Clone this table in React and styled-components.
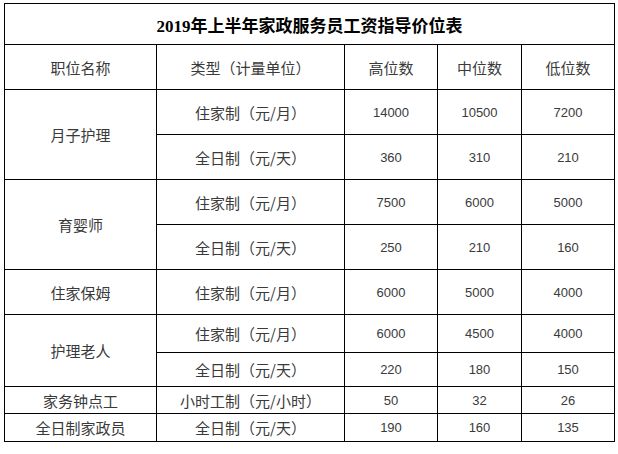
import React from "react";
import styled, { createGlobalStyle } from "styled-components";

const Global = createGlobalStyle`
  html, body { margin: 0; padding: 0; background: #fff; }
  body { font-family: "Noto Sans CJK SC", "Liberation Sans", sans-serif; }
`;

const Page = styled.div`
  padding: 3px 0 0 4px;
`;

const Grid = styled.div`
  display: grid;
  width: 609px;
  grid-template-columns: 151px 187px 92px 83px 92px;
  grid-template-rows: 40px 44px 44px 44px 44px 44px 44px 37px 33px 26px 27px;
  gap: 1px;
  padding: 1px;
  background: #000;
`;

const Cell = styled.div`
  background: #fff;
  display: flex;
  align-items: center;
  justify-content: center;
  color: #3a3a3a;
  font-size: 15px;
  font-family: "Noto Sans CJK SC", sans-serif;
  white-space: nowrap;
  grid-row: ${(p) => p.$row || "auto"};
  grid-column: ${(p) => p.$col || "auto"};
`;

const Title = styled(Cell)`
  grid-column: 1 / span 5;
  color: #000;
  font-size: 17px;
  font-weight: 700;
  font-family: "Liberation Serif", "Noto Sans CJK SC", serif;
  padding-top: 1px;
`;

const Num = styled(Cell)`
  font-family: "Liberation Sans", sans-serif;
  font-size: 13px;
`;

const rows = [
  { name: "月子护理", span: 2, items: [["住家制（元/月）", "14000", "10500", "7200"], ["全日制（元/天）", "360", "310", "210"]] },
  { name: "育婴师", span: 2, items: [["住家制（元/月）", "7500", "6000", "5000"], ["全日制（元/天）", "250", "210", "160"]] },
  { name: "住家保姆", span: 1, items: [["住家制（元/月）", "6000", "5000", "4000"]] },
  { name: "护理老人", span: 2, items: [["住家制（元/月）", "6000", "4500", "4000"], ["全日制（元/天）", "220", "180", "150"]] },
  { name: "家务钟点工", span: 1, items: [["小时工制（元/小时）", "50", "32", "26"]] },
  { name: "全日制家政员", span: 1, items: [["全日制（元/天）", "190", "160", "135"]] },
];

export default function App() {
  let r = 3;
  const cells = [];
  rows.forEach((g, gi) => {
    cells.push(
      <Cell key={`n${gi}`} $row={`${r} / span ${g.span}`} $col="1">
        {g.name}
      </Cell>
    );
    g.items.forEach((it, ii) => {
      const row = r + ii;
      cells.push(
        <Cell key={`t${gi}-${ii}`} $row={`${row}`} $col="2">{it[0]}</Cell>
      );
      it.slice(1).forEach((v, vi) => {
        cells.push(
          <Num key={`v${gi}-${ii}-${vi}`} $row={`${row}`} $col={`${3 + vi}`}>{v}</Num>
        );
      });
    });
    r += g.span;
  });

  return (
    <Page>
      <Global />
      <Grid>
        <Title>2019年上半年家政服务员工资指导价位表</Title>
        <Cell>职位名称</Cell>
        <Cell>类型（计量单位）</Cell>
        <Cell>高位数</Cell>
        <Cell>中位数</Cell>
        <Cell>低位数</Cell>
        {cells}
      </Grid>
    </Page>
  );
}
